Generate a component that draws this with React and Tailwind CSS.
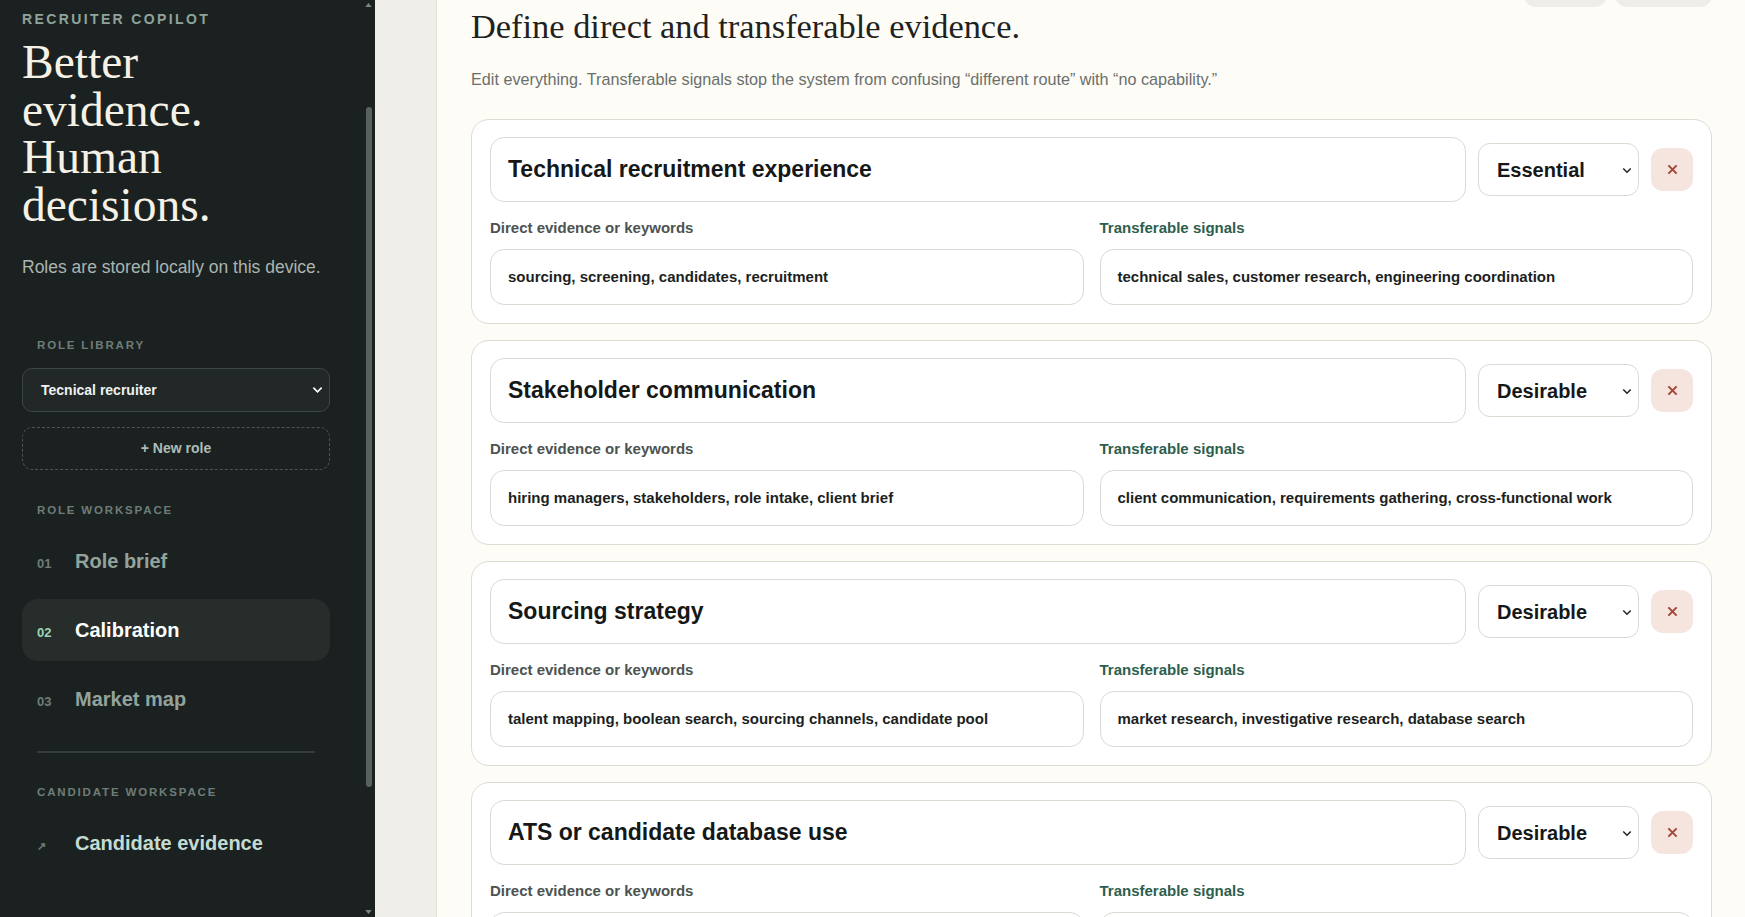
import React, { useEffect, useRef } from "react";

const sans = { fontFamily: '"Liberation Sans", Arial, sans-serif' };

const criteria = [
  {
    title: "Technical recruitment experience",
    weight: "Essential",
    direct: "sourcing, screening, candidates, recruitment",
    transfer: "technical sales, customer research, engineering coordination",
  },
  {
    title: "Stakeholder communication",
    weight: "Desirable",
    direct: "hiring managers, stakeholders, role intake, client brief",
    transfer: "client communication, requirements gathering, cross-functional work",
  },
  {
    title: "Sourcing strategy",
    weight: "Desirable",
    direct: "talent mapping, boolean search, sourcing channels, candidate pool",
    transfer: "market research, investigative research, database search",
  },
  {
    title: "ATS or candidate database use",
    weight: "Desirable",
    direct: "ATS, applicant tracking, CRM, candidate database",
    transfer: "CRM administration, data hygiene, pipeline reporting",
  },
];

function Chevron({ className }) {
  return (
    <svg viewBox="0 0 12 8" className={className} fill="none" stroke="currentColor" strokeWidth="1.8">
      <path d="M1.5 1.5 L6 6 L10.5 1.5" />
    </svg>
  );
}

function NavItem({ num, label, active, arrow }) {
  return (
    <div
      className={
        "flex items-center h-[62px] rounded-[16px] px-[15px] " +
        (active ? "bg-[#262d2b]" : "")
      }
    >
      <div className="flex items-baseline">
        <span
          className={
            "w-[38px] text-[13px] font-bold " +
            (active ? "text-[#9fd3b6]" : "text-[#6f7c77]")
          }
        >
          {arrow ? <span className="text-[11px]">↗</span> : num}
        </span>
        <span
          className={
            "text-[20px] font-bold " +
            (active ? "text-white" : arrow ? "text-[#c3dcd3]" : "text-[#93a39c]")
          }
        >
          {label}
        </span>
      </div>
    </div>
  );
}

// the browser hides real scrollbars in screenshots, so the track is drawn
function ScrollTrack() {
  return (
    <div className="w-[15px] shrink-0 h-screen flex flex-col">
      <svg viewBox="0 0 8 5" className="w-[7px] h-[4px] ml-[5px] mt-[3px]" fill="#7c8582">
        <path d="M0 5 L4 0 L8 5 Z" />
      </svg>
      <div className="mt-[100px] ml-[6px] w-[6px] h-[680px] rounded-full bg-[#58615e]" />
      <div className="flex-1" />
      <svg viewBox="0 0 8 5" className="w-[7px] h-[4px] ml-[5px] mb-[3px]" fill="#7c8582">
        <path d="M0 0 L8 0 L4 5 Z" />
      </svg>
    </div>
  );
}

function Sidebar({ innerRef }) {
  return (
    <aside className="w-[375px] shrink-0 h-screen flex bg-[#1b2120]" style={sans}>
      <div ref={innerRef} className="flex-1 h-screen overflow-hidden">
        <div className="pl-[22px] w-[330px] pt-[146px] pb-[211px]">
          <p className="text-[14px] leading-5 font-bold tracking-[0.17em] text-[#8fa39b]">
            RECRUITER COPILOT
          </p>
          <h1 className="mt-[10px] font-['Liberation_Serif',serif] text-[47.5px] leading-[47.5px] text-[#f6f1e6] w-[250px]">
            Better evidence. Human decisions.
          </h1>
          <p className="mt-[25px] text-[17.5px] leading-[26px] text-[#aab4b0]">
            Roles are stored locally on this device.
          </p>

          <p className="mt-[57px] pl-[15px] text-[11.5px] leading-4 font-bold tracking-[0.16em] text-[#6f7d78]">
            ROLE LIBRARY
          </p>
          <div className="mt-[15px] h-[44px] flex items-center justify-between rounded-[10px] border border-[#3d4543] bg-[#212827] pl-[18px] pr-[6px] text-[14px] font-bold text-[#f0f2f1]">
            <span>Tecnical recruiter</span>
            <Chevron className="w-[11px] h-[8px] text-white" />
          </div>
          <div className="mt-[15px] h-[43px] flex items-center justify-center rounded-[10px] border border-dashed border-[#4d5553] text-[14px] font-bold text-[#aebdb6]">
            + New role
          </div>

          <p className="mt-[32px] pl-[15px] text-[11.5px] leading-4 font-bold tracking-[0.16em] text-[#6f7d78]">
            ROLE WORKSPACE
          </p>
          <nav className="mt-[12px] flex flex-col gap-[7px]">
            <NavItem num="01" label="Role brief" />
            <NavItem num="02" label="Calibration" active />
            <NavItem num="03" label="Market map" />
          </nav>
          <div className="mt-[21px] mx-[15px] border-t-2 border-[#343c3a]" />
          <p className="mt-[31px] pl-[15px] text-[11.5px] leading-4 font-bold tracking-[0.16em] text-[#6f7d78]">
            CANDIDATE WORKSPACE
          </p>
          <div className="mt-[12px]">
            <NavItem label="Candidate evidence" arrow />
          </div>
        </div>
      </div>
      <ScrollTrack />
    </aside>
  );
}

function CriterionCard({ item }) {
  return (
    <div className="rounded-[18px] border border-[#dedbd3] bg-white px-[18px] pt-[17px] pb-[18px]">
      <div className="flex items-center gap-3">
        <div className="flex-1 h-[65px] flex items-center rounded-[14px] border border-[#dcd9d2] px-[17px] text-[23px] font-extrabold text-[#151817]">
          {item.title}
        </div>
        <div className="relative w-[161px] h-[53px] rounded-[12px] border border-[#dcd9d2] bg-white">
          <select
            defaultValue={item.weight}
            className="appearance-none w-full h-full bg-transparent pl-[18px] text-[20px] font-bold text-[#151817] outline-none"
            style={sans}
          >
            <option>Essential</option>
            <option>Desirable</option>
          </select>
          <Chevron className="absolute right-[6px] top-[23px] w-[10px] h-[7px] text-[#222] pointer-events-none" />
        </div>
        <button className="w-[42px] h-[43px] flex items-center justify-center rounded-[12px] bg-[#f6e5df]">
          <svg viewBox="0 0 12 12" className="w-[11px] h-[11px]" stroke="#a3493a" strokeWidth="2.3">
            <path d="M1.5 1.5 L10.5 10.5 M10.5 1.5 L1.5 10.5" />
          </svg>
        </button>
      </div>
      <div className="mt-4 grid grid-cols-2 gap-x-4">
        <div>
          <p className="text-[15px] leading-5 font-semibold text-[#4d5350]">Direct evidence or keywords</p>
          <div className="mt-[11px] h-[56px] flex items-center rounded-[14px] border border-[#dcd9d2] px-[17px] text-[15px] font-semibold text-[#1c1f1e]">
            {item.direct}
          </div>
        </div>
        <div>
          <p className="text-[15px] leading-5 font-semibold text-[#2e5e4c]">Transferable signals</p>
          <div className="mt-[11px] h-[56px] flex items-center rounded-[14px] border border-[#dcd9d2] px-[17px] text-[15px] font-semibold text-[#1c1f1e]">
            {item.transfer}
          </div>
        </div>
      </div>
    </div>
  );
}

export default function App() {
  const sideRef = useRef(null);
  const mainRef = useRef(null);

  useEffect(() => {
    if (sideRef.current) sideRef.current.scrollTop = 137;
    if (mainRef.current) mainRef.current.scrollTop = 61;
  }, []);

  return (
    <div className="flex h-screen overflow-hidden bg-[#efeee9]" style={sans}>
      <Sidebar innerRef={sideRef} />
      <div className="flex-1 pl-[61px] h-screen">
        <main ref={mainRef} className="h-screen overflow-hidden bg-[#fdfcf7] border-l border-[#e3e0d8]">
          <div className="pl-[34px] pr-[33px] pt-[28px] pb-[80px]">
            <div className="flex justify-between items-start">
              <div>
                <div className="h-4 mb-[24px]" />
                <h2 className="font-['Liberation_Serif',serif] text-[34.4px] leading-[38px] text-[#1e2220]">
                  Define direct and transferable evidence.
                </h2>
                <p className="mt-[22px] text-[16.2px] leading-6 text-[#6b6f6c]">
                  Edit everything. Transferable signals stop the system from confusing “different route” with “no capability.”
                </p>
              </div>
              <div className="flex gap-2">
                <button aria-label="Back" className="w-[83px] h-[40px] rounded-[12px] bg-[#efede7]" />
                <button aria-label="Continue" className="w-[97px] h-[40px] rounded-[12px] bg-[#efede7]" />
              </div>
            </div>
            <div className="mt-[28px] flex flex-col gap-4">
              {criteria.map((c) => (
                <CriterionCard key={c.title} item={c} />
              ))}
            </div>
          </div>
        </main>
      </div>
    </div>
  );
}
